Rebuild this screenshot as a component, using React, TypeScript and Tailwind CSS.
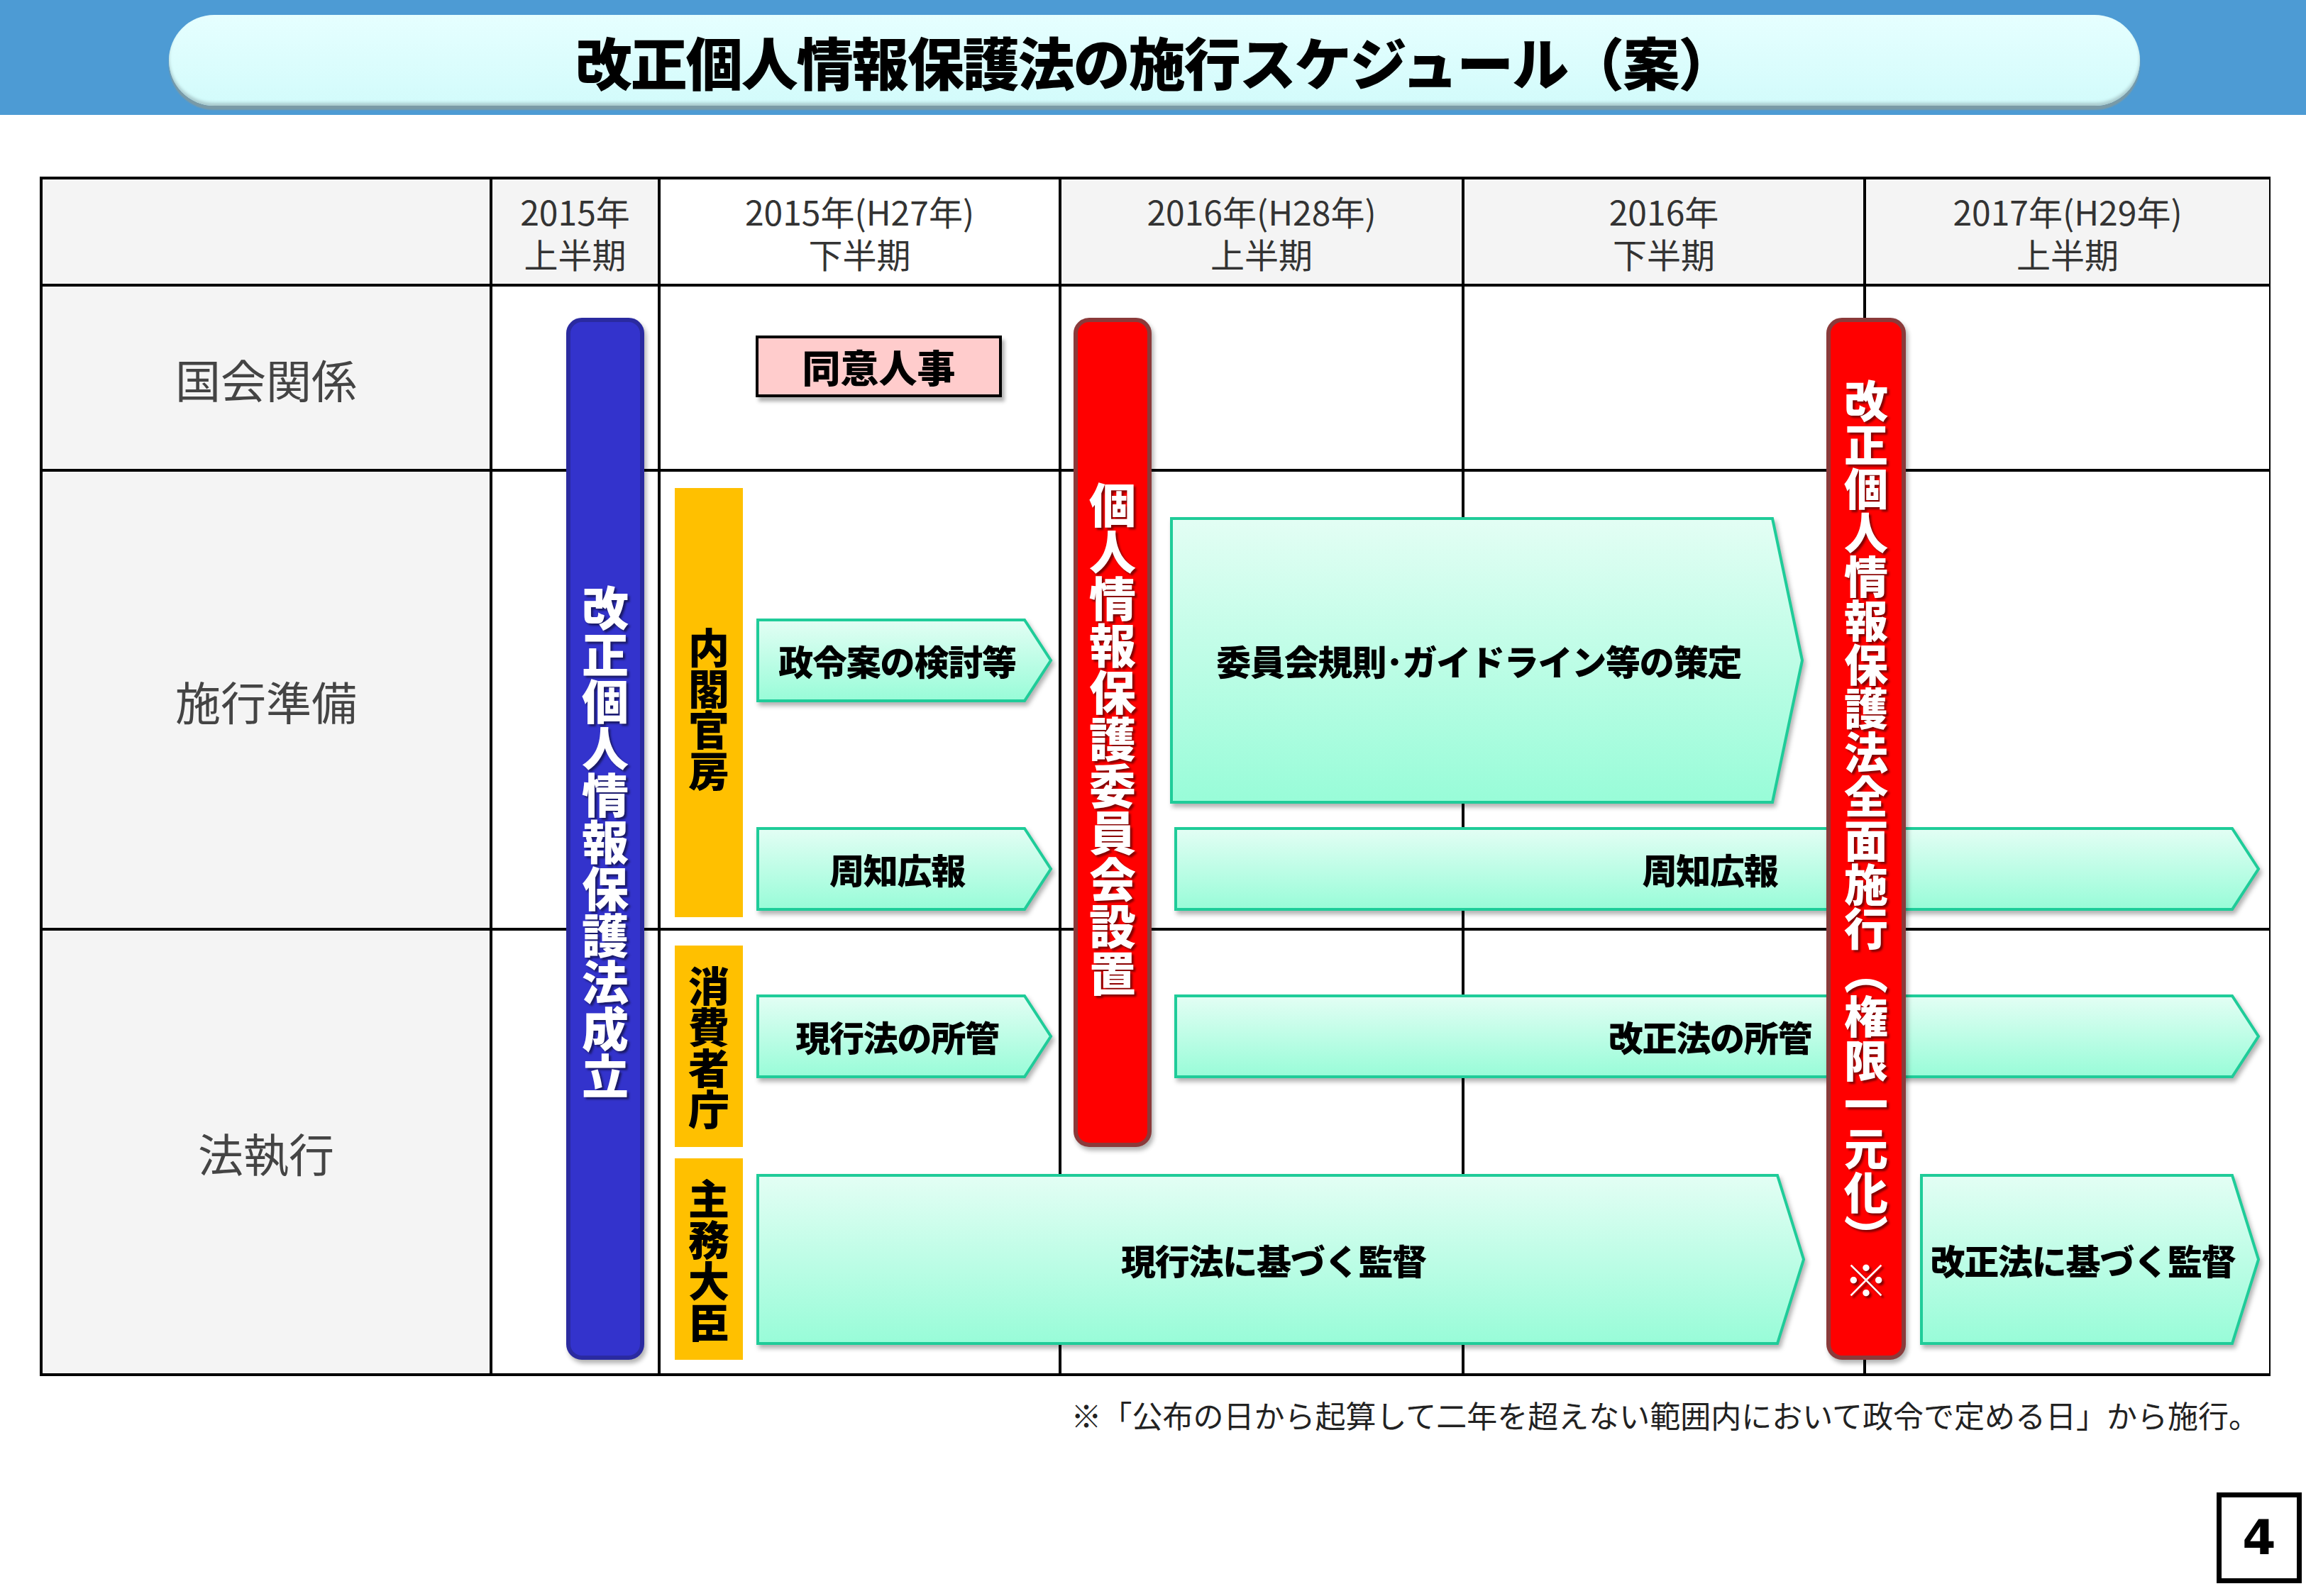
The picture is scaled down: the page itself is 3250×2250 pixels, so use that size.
import React from "react";

const F = { fontFamily: '"Noto Sans CJK JP", "Noto Sans", sans-serif' };

function Arrow({ x, y, w, h, tip, text }: { x: number; y: number; w: number; h: number; tip: number; text: string }) {
  const id = "g" + x + "_" + y;
  return (
    <div className="absolute flex items-center justify-center" style={{ left: x, top: y, width: w, height: h }}>
      <svg className="absolute inset-0" width={w} height={h} viewBox={`0 0 ${w} ${h}`} style={{ filter: "drop-shadow(3px 5px 3px rgba(0,0,0,0.3))" }}>
        <defs>
          <linearGradient id={id} x1="0" y1="0" x2="0" y2="1">
            <stop offset="0" stopColor="#e3fef4" />
            <stop offset="1" stopColor="#98fcd8" />
          </linearGradient>
        </defs>
        <polygon points={`3,3 ${w - tip},3 ${w - 3},${h / 2} ${w - tip},${h - 3} 3,${h - 3}`} fill={`url(#${id})`} stroke="#1fcc99" strokeWidth="4" />
      </svg>
      <span className="relative text-[49px] font-black text-black tracking-tight" style={{ paddingRight: tip / 2 }}>{text}</span>
    </div>
  );
}

function VBar({ x, y, w, h, color, border, text, pt, textColor, rounded, fs }: any) {
  return (
    <div
      className={`absolute flex justify-center ${rounded ? "rounded-[22px]" : ""}`}
      style={{ left: x, top: y, width: w, height: h, background: color, border: border ? `6px solid ${border}` : undefined, paddingTop: pt, boxShadow: rounded ? "3px 5px 6px rgba(0,0,0,0.3)" : undefined }}
    >
      <span
        className="font-black leading-none"
        style={{ writingMode: "vertical-rl", textOrientation: "upright", color: textColor, fontSize: fs, textShadow: rounded ? "3px 3px 3px rgba(0,0,0,0.5)" : undefined }}
      >
        {text}
      </span>
    </div>
  );
}

export default function App() {
  const head = "bg-[#f4f4f4] flex flex-col items-center justify-center text-[48px] leading-[60px] text-[#333]";
  const lab = "bg-[#f4f4f4] flex items-center justify-center text-[64px] text-[#444]";
  return (
    <div className="relative w-[3250px] h-[2250px] bg-white overflow-hidden" style={F}>
      <div className="h-[162px] bg-[#4d9bd4] pt-[21px] pl-[238px]">
        <div className="w-[2778px] h-[128px] rounded-full bg-gradient-to-b from-[#e6ffff] to-[#d2fbfb] flex items-center justify-center shadow-[0_6px_2px_#7a9aa6,inset_0_-4px_4px_#a9c9cc]">
          <span className="text-[80px] font-black text-black tracking-tight">改正個人情報保護法の施行スケジュール（案）</span>
        </div>
      </div>

      <div className="ml-[56px] mt-[87px] w-[3144px] grid bg-black p-[4px] gap-[4px] grid-cols-[630px_233px_561px_564px_562px_568px] grid-rows-[147px_257px_643px_624px]">
        <div className="bg-[#f4f4f4]" />
        <div className={head}><span>2015年</span><span>上半期</span></div>
        <div className={head + " !bg-white"}><span>2015年(H27年)</span><span>下半期</span></div>
        <div className={head}><span>2016年(H28年)</span><span>上半期</span></div>
        <div className={head}><span>2016年</span><span>下半期</span></div>
        <div className={head}><span>2017年(H29年)</span><span>上半期</span></div>
        {["国会関係", "施行準備", "法執行"].map((t) => (
          <React.Fragment key={t}>
            <div className={lab}>{t}</div>
            <div className="bg-white" /><div className="bg-white" /><div className="bg-white" /><div className="bg-white" /><div className="bg-white" />
          </React.Fragment>
        ))}
      </div>

      <div className="absolute left-[1065px] top-[473px] w-[347px] h-[87px] bg-[#ffcccc] border-[4px] border-black flex items-center justify-center shadow-[4px_6px_5px_rgba(0,0,0,0.3)]">
        <span className="text-[54px] font-black">同意人事</span>
      </div>

      <VBar x={951} y={688} w={96} h={605} color="#ffc000" text="内閣官房" pt={196} textColor="#000" fs={58} />
      <VBar x={951} y={1333} w={96} h={284} color="#ffc000" text="消費者庁" pt={28} textColor="#000" fs={58} />
      <VBar x={951} y={1633} w={96} h={284} color="#ffc000" text="主務大臣" pt={28} textColor="#000" fs={58} />

      <Arrow x={1065} y={871} w={419} h={120} tip={40} text="政令案の検討等" />
      <Arrow x={1648} y={728} w={895} h={406} tip={45} text="委員会規則･ガイドライン等の策定" />
      <Arrow x={1065} y={1165} w={419} h={120} tip={40} text="周知広報" />
      <Arrow x={1654} y={1165} w={1532} h={120} tip={40} text="周知広報" />
      <Arrow x={1065} y={1401} w={419} h={120} tip={40} text="現行法の所管" />
      <Arrow x={1654} y={1401} w={1532} h={120} tip={40} text="改正法の所管" />
      <Arrow x={1065} y={1654} w={1480} h={243} tip={40} text="現行法に基づく監督" />
      <Arrow x={2705} y={1654} w={481} h={243} tip={40} text="改正法に基づく監督" />

      <VBar x={798} y={448} w={110} h={1469} color="#3333cc" border="#2a2aa0" text="改正個人情報保護法成立" pt={370} textColor="#fff" rounded fs={66} />
      <VBar x={1513} y={448} w={110} h={1169} color="#ff0000" border="#8b3a3a" text="個人情報保護委員会設置" pt={225} textColor="#fff" rounded fs={66} />
      <VBar x={2574} y={448} w={112} h={1469} color="#ff0000" border="#8b3a3a" text="改正個人情報保護法全面施行（権限一元化）※" pt={80} textColor="#fff" rounded fs={62} />

      <div className="absolute right-[66px] top-[1962px] text-[43px] text-[#222]">※「公布の日から起算して二年を超えない範囲内において政令で定める日」から施行。</div>

      <div className="absolute left-[3124px] top-[2104px] w-[120px] h-[128px] border-[7px] border-black flex items-center justify-center">
        <span className="text-[68px] font-black" style={{ fontFamily: '"DejaVu Sans", sans-serif' }}>4</span>
      </div>
    </div>
  );
}
